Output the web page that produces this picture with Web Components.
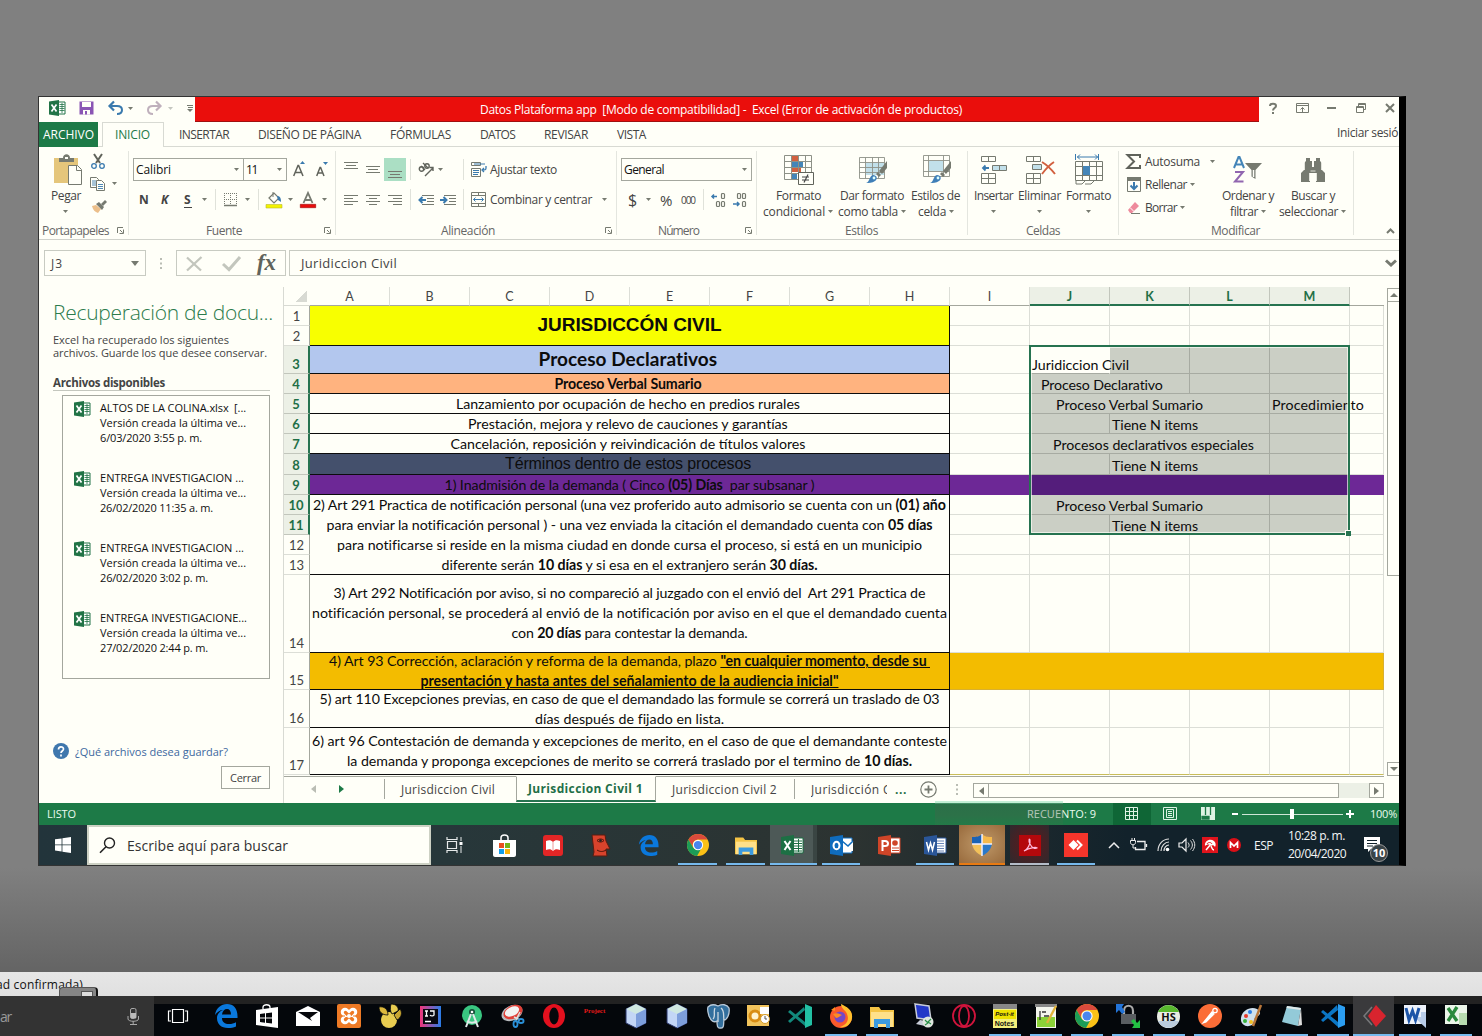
<!DOCTYPE html>
<html lang="es">
<head>
<meta charset="utf-8">
<title>Datos Plataforma app - Excel</title>
<style>
html,body{margin:0;height:1036px;width:1482px;overflow:hidden}
body{background:linear-gradient(#808080 0,#808080 868px,#646464 972px);font-family:"Open Sans","Noto Sans",sans-serif;font-size:12px;color:#444}
</style>
</head>
<body>
<remote-desktop></remote-desktop>
<script>
/* ---------- icons: name -> [width, height, svg content] ---------- */
const G='#767a70', B='#3a7aae';
const chrome='<circle cx="12" cy="12" r="12" fill="#fbc116"/><path d="M1.6 6A12 12 0 0 1 22.4 6H12a6 6 0 0 0-5.2 9z" fill="#d94a3c"/><path d="M1.6 6A12 12 0 0 0 11 24l5-9a6 6 0 0 1-9.2 0z" fill="#1c9c57"/><circle cx="12" cy="12" r="5.6" fill="#fff"/><circle cx="12" cy="12" r="4.5" fill="#4a86ee"/>';
const edge='<path d="M1 11C2 4 7 0 13 0c7 0 11 5 10.500 14H8c0 4 3 6 7 6 3 0 5-.7 7-1.800V22.500C19.500 23.700 17 24 14 24 7 24 3 20 3 14c0-4 3-7 6-8C6 6 3 8 1 11zM8 10.500h9C17 7 15.500 5 13 5s-4.600 2-5 5.500z" fill="#0a78dc"/>';
const folder='<path d="M0 3h9l2 3h13v17H0z" fill="#f5c445"/><path d="M1 8h22v15H1z" fill="#ffe08a"/><path d="M4 24v-9h16v9h-4v-4H8v4z" fill="#3c9be0"/>';
const cube='<path d="M12 0l10 5v14l-10 5-10-5V5z" fill="#c3d6f6" stroke="#28346a"/><path d="M12 0l10 5-10 5L2 5z" fill="#cfe8e0"/><path d="M12 10v14l10-5V5z" fill="#7d9edb"/>';
const grid5=(c)=>`<path d="M.5.5h28v24H.5zM.5 6.500h28M.5 12.500h28M.5 18.500h28M7.500.5v24M14.500.5v24M21.500.5v24" fill="none" stroke="${c}"/>`;
const brush='<path d="M28 6v7l-5 6-3-3z" fill="#767a70"/><path d="M19 17l3 3-2 2-3-3z" fill="#767a70"/><path d="M7 28c4-1 3-7 7-8 4 0 5 4 2 6-3 2-6 2-9 2z" fill="#3f7fb8"/><circle cx="15" cy="23" r="1.400" fill="#dff"/>';
const xl='<path d="M9 2h7v12H9z" fill="#fff" stroke="#217346"/><path d="M10.500 4.500h5M10.500 6.500h5M10.500 8.500h5M10.500 10.500h5M13 3v10" stroke="#217346" stroke-width=".8"/><path d="M0 1.600L10 0v16L0 14.400z" fill="#217346"/><path d="M2.500 4.500l5 7M7.500 4.500l-5 7" stroke="#fff" stroke-width="1.700"/>';
const office=(c,glyph,doc)=>`<path d="M11 3h11v15H11z" fill="#fff" stroke="${c}"/>${doc}<path d="M0 2L13 0v21L0 19z" fill="${c}"/>${glyph}`;
const docLines='<path d="M13 6h7M13 8.500h7M13 11h7M13 13.500h7M13 16h7" stroke="#6a86b8" stroke-width="1"/>';
const ICONS={
excel:[16,16,xl],
save:[15,14,'<path d="M.5.5h14v13H.5z" fill="#8a55b4"/><path d="M3 1h9v5H3z" fill="#fffff8"/><path d="M4 9h7v4.500H4z" fill="#fffff8"/><path d="M6 10h2v3.500H6z" fill="#8a55b4"/>'],
undo:[15,14,`<path d="M1 5h8c3 0 5 1.700 5 4s-2 4-5 4" fill="none" stroke="${B}" stroke-width="2"/><path d="M6 .5L1.500 5 6 9.500" fill="none" stroke="${B}" stroke-width="2.200"/>`],
redo:[15,14,'<path d="M14 5H6C3 5 1 6.700 1 9s2 4 5 4" fill="none" stroke="#bfb0bc" stroke-width="2"/><path d="M9 .5L13.500 5 9 9.500" fill="none" stroke="#bfb0bc" stroke-width="2.200"/>'],
caret:[5,3,`<path d="M0 0h5L2.500 3z" fill="${G}"/>`],
caretL:[5,3,`<path d="M0 0h5L2.500 3z" fill="#c4c6c0"/>`],
caretB:[8,5,`<path d="M0 0h8L4 5z" fill="${G}"/>`],
qat:[6,7,`<path d="M0 .5h6M1 2.500h5" stroke="${G}"/><path d="M0 4h6L3 7z" fill="${G}"/>`],
help:[8,11,`<path d="M1 3C1 0 7 0 7 3c0 2-3 2.200-3 4.500M4 9v2" fill="none" stroke="${G}" stroke-width="2"/>`],
ropt:[13,10,`<path d="M.5.5h12v9H.5zM.5 2.500h12" fill="none" stroke="${G}"/><path d="M6.500 9V4.500M4.500 6.500l2-2 2 2" fill="none" stroke="${G}"/>`],
min:[9,2,`<path d="M0 0h9v2H0z" fill="${G}"/>`],
restore:[10,10,`<path d="M.5 3.500h7v6h-7zM2.500 3V.5h7v6h-2" fill="none" stroke="${G}"/><path d="M1 4.500h6M3 1.500h6" stroke="${G}"/>`],
close:[10,10,`<path d="M1 1l8 8M9 1L1 9" stroke="${G}" stroke-width="2"/>`],
paste:[28,31,'<path d="M0 4h24v25H0z" fill="#e5c67b"/><path d="M5 4h4c0-5 7-5 7 0h4v4H5z" fill="#767a70"/><path d="M11 3h3v2h-3z" fill="#fffff8"/><path d="M14.500 11.500h9l4 4v15h-13z" fill="#fffff8" stroke="#767a70"/><path d="M22.500 12v4.500h5" fill="none" stroke="#767a70"/>'],
cut:[14,15,`<path d="M3 0l6 9M11 0L5 9" stroke="#60635b" stroke-width="2"/><circle cx="3" cy="12" r="2.300" fill="none" stroke="${B}" stroke-width="1.300"/><circle cx="11" cy="12" r="2.300" fill="none" stroke="${B}" stroke-width="1.300"/>`],
copy:[16,14,`<path d="M.5.5h6l2 2v8h-8z" fill="#fffff8" stroke="${G}"/><path d="M2 4h4M2 6h4M2 8h4" stroke="${B}" stroke-width=".9"/><path d="M6.500 3.500h5l3 3v7h-8z" fill="#fffff8" stroke="${G}"/><path d="M8 7.500h5M8 9.500h5M8 11.500h5" stroke="${B}" stroke-width=".9"/>`],
painter:[16,13,'<path d="M1 6l4-1 5 4-3 4c-3-1-5-3-6-7z" fill="#ecbf8b"/><path d="M5 4l3-2 5 5-2 3z" fill="#767a70"/><path d="M10 4l4-4 2 2-4 4z" fill="#767a70"/>'],
launch:[7,7,`<path d="M.5 6V.5H6" fill="none" stroke="${G}"/><path d="M3 3l2.500 2.500M6.500 2.500v4h-4" fill="none" stroke="${G}"/>`],
grow:[12,16,`<path d="M.7 15L5 4.500h.6L10 15M2.500 11.500h5.600" fill="none" stroke="#60635b" stroke-width="1.500"/><path d="M7 3h5L9.500 0z" fill="${B}"/>`],
shrink:[12,14,`<path d="M.7 14L4 5.500h.6L8 14M2 11h4.600" fill="none" stroke="#60635b" stroke-width="1.500"/><path d="M7 0h5L9.500 3z" fill="${B}"/>`],
borders:[14,14,`<path d="M.5 0v13M6.500 0v13M12.500 0v13M0 .5h13M0 6.500h13" stroke="${G}" stroke-dasharray="1 1"/><path d="M0 12.500h13" stroke="${G}" stroke-width="1.500"/>`],
fill:[16,16,`<path d="M3 6l5-5 5 5-5 5z" fill="none" stroke="${G}" stroke-width="1.200"/><path d="M7 0v5" stroke="${G}"/><path d="M11 4c3 0 4 2 4 6l-3-2z" fill="${B}"/><path d="M0 12.500h16v3.500H0z" fill="#f3f300" stroke="#b8bb30" stroke-width=".6"/>`],
fcolor:[16,16,`<path d="M3.500 11L8 1l4.500 10M5.500 8h5" fill="none" stroke="${G}" stroke-width="1.800"/><path d="M.3 12.300h15.400v3.400H.3z" fill="#e80c0c" stroke="#900" stroke-width=".6"/>`],
atop:[14,14,`<path d="M0 .5h14M2 3.500h10M0 6.500h14" stroke="${G}"/>`],
amid:[14,7,`<path d="M0 .5h14M2 3.500h10M0 6.500h14" stroke="${G}"/>`],
abot:[14,9,`<path d="M0 2.500h14M2 5.500h10M0 8.500h14" stroke="${G}"/>`],
left:[14,10,`<path d="M0 .5h14M0 3.500h9M0 6.500h14M0 9.500h9" stroke="${G}"/>`],
cent:[14,10,`<path d="M0 .5h14M3 3.500h8M0 6.500h14M3 9.500h8" stroke="${G}"/>`],
right:[14,10,`<path d="M0 .5h14M5 3.500h9M0 6.500h14M5 9.500h9" stroke="${G}"/>`],
orient:[16,15,`<g fill="none" stroke="#60635b" stroke-width="1.400"><circle cx="3.500" cy="7" r="2.200"/><path d="M3 4l4 4M5 1l5 5"/><circle cx="9" cy="4" r="2.200"/><path d="M7 14l8-8M11.500 5.500H15V9"/></g>`],
outd:[16,10,`<path d="M4 .5h12M9 3.500h7M9 6.500h7M4 9.500h12" stroke="${G}"/><path d="M8 5H2M4.500 2L1.500 5l3 3" fill="none" stroke="${B}" stroke-width="2"/>`],
ind:[16,10,`<path d="M4 .5h12M9 3.500h7M9 6.500h7M4 9.500h12" stroke="${G}"/><path d="M0 5h6M3.500 2l3 3-3 3" fill="none" stroke="${B}" stroke-width="2"/>`],
wrap:[16,15,`<path d="M.5.500h9v3h-9zM.5 6.500h9v8h-9z" fill="none" stroke="${G}"/><path d="M2 8.500h6M2 10.500h6M2 12.500h5M3 2h11" stroke="${B}"/><path d="M15 4v2c0 2-1 2-4 2M13 6l-2 2 2 2" fill="none" stroke="${B}" stroke-width="1.300"/>`],
merge:[15,15,`<path d="M.5.5h14v14H.5zM.5 3.500h14M.5 11.500h14M7.500.5v3M7.500 11.500v3" fill="none" stroke="${G}"/><path d="M2.500 7.500h10M4.500 5.500l-2 2 2 2M10.500 5.500l2 2-2 2" fill="none" stroke="${B}"/>`],
dec1:[15,14,`<path d="M6 3.500H1M3 1.500l-2 2 2 2" fill="none" stroke="${B}" stroke-width="1.500"/><g fill="none" stroke="${G}" stroke-width="1.200"><rect x="10.500" y=".5" width="3" height="5" rx="1"/><rect x="5.500" y="8.500" width="3" height="5" rx="1"/><rect x="10.500" y="8.500" width="3" height="5" rx="1"/></g>`],
dec2:[15,14,`<path d="M0 11h6M4 9l2 2-2 2" fill="none" stroke="${B}" stroke-width="1.500"/><g fill="none" stroke="${G}" stroke-width="1.200"><rect x="4.500" y=".5" width="3" height="5" rx="1"/><rect x="9.500" y=".5" width="3" height="5" rx="1"/><rect x="9.500" y="8.500" width="3" height="5" rx="1"/></g>`],
cond:[30,30,`<path d="M8 1h6v5H8zM8 13h9v4H8z" fill="#d2603f"/><path d="M8 7h11v5H8zM8 19h5v5H8z" fill="#4485b8"/>${grid5('#8d9187').replace(/28/g,'27')}<path d="M14.500 17.500h15v12h-15z" fill="#fffff8" stroke="#60635b"/><path d="M18 22h7M18 25h7M24 19.500l-4 8" stroke="#444" stroke-width="1.200"/>`],
ftab:[30,30,`<path d="M7 8h18v12H7z" fill="#c2e0ea"/><path d="M.5 2.500h25v21H.5zM.5 7.500h25M.5 12.500h25M.5 17.500h25M6.500 2.500v21M13.500 2.500v21M19.500 2.500v21" fill="none" stroke="#8d9187" stroke-width=".9"/>${brush}`],
cellst:[30,30,`<path d="M.5.500h26v21H.5zM.5 5.500h26M5.500.5v21M20.500.5v21M.5 16.500h26" fill="none" stroke="#8d9187" stroke-width=".9"/><path d="M6 6h14v10H6z" fill="#c2e0ea"/>${brush}`],
insc:[27,28,`<g fill="#fffff8" stroke="${G}"><path d="M.5.5h14v5H.5zM7.500.5v5M.5 17.500h14v10H.5zM7.500 17.500v10M.5 22.500h14"/><path d="M11.500 9.500h14v5h-14zM18.500 9.500v5" fill="#c2e0ea"/></g><path d="M8 12H2M4.500 9.500L2 12l2.500 2.500" fill="none" stroke="${B}" stroke-width="1.800"/>`],
delc:[30,28,`<g fill="#fffff8" stroke="${G}"><path d="M.5.5h14v5H.5zM7.500.5v5M.5 17.500h14v10H.5zM7.500 17.500v10M.5 22.500h14"/><path d="M6.500 8.500h9v5h-9z" fill="#c2e0ea"/></g><path d="M16 6c5 3 9 7 13 12M28 6c-5 3-9 8-12 12" fill="none" stroke="#d2603f" stroke-width="2"/>`],
fmtc:[29,31,`<path d="M2 3h21M5 .500L2.500 3 5 5.500M20 .500L22.500 3 20 5.500M.5 0v6M23.500 0v6" fill="none" stroke="${B}"/><path d="M.5 7.500h27v19H.5zM.5 12.500h27M.5 21.500h27M7.500 7.500v19M14.500 7.500v19M21.500 7.500v19" fill="none" stroke="${G}"/><path d="M8 12h7v9H8z" fill="#4485b8"/><path d="M1 27v3h6l3-3M10 30h6l3-3" fill="none" stroke="${G}"/>`],
sum:[15,15,'<path d="M14 4V1H1.500L8 7.500 1.500 14H14v-3" fill="none" stroke="#60635b" stroke-width="2"/>'],
fillD:[14,15,`<path d="M.5.5h13v14H.5z" fill="none" stroke="${G}"/><path d="M0 0h14v4H0z" fill="${G}"/><path d="M7 5v7M3.500 8.500L7 12l3.500-3.500" fill="none" stroke="${B}" stroke-width="2"/>`],
erase:[14,14,'<path d="M8 1l4 4-7 7H3L1 9z" fill="#ee8a9c"/><path d="M3 6.500l4 4" stroke="#fff"/><path d="M4 12.500h9" stroke="#767a70"/>'],
sort:[30,28,`<path d="M1 12L5.500 1h1L11 12M2.500 8.500h7" fill="none" stroke="#4485b8" stroke-width="2"/><path d="M2 16h8l-8 9.500h8.500" fill="none" stroke="#9166b0" stroke-width="2"/><path d="M12 7h17l-6.500 7v9l-4-2.500V14z" fill="${G}"/><path d="M20.500 14v7" stroke="#fffff8" stroke-width="1.500"/>`],
find:[26,24,`<path d="M6 0h4v3h2v6h2V3h2V0h4v3l2 2v7l3 3v9h-9v-9h-6v9H1v-9l3-3V5l2-2z" fill="${G}"/><path d="M4.500 4v8M21.500 4v8M10.500 13h5M9.500 15v8M16.500 15v8" stroke="#fffff8" stroke-width=".8"/>`],
up:[9,6,`<path d="M1 5l3.500-3.500L8 5" fill="none" stroke="${G}" stroke-width="2"/>`],
down:[12,8,`<path d="M1 1.500L6 6l5-4.500" fill="none" stroke="${G}" stroke-width="3"/>`],
fxx:[17,15,'<path d="M1 1.500l14 13M15.500 1L1 14.500" stroke="#c3c6bd" stroke-width="2.300"/>'],
fxv:[19,15,'<path d="M1 8l6 5.500L18 1" fill="none" stroke="#c3c6bd" stroke-width="3"/>'],
dots:[2,11,`<path d="M0 0h2v2H0zM0 4.500h2v2H0zM0 9h2v2H0z" fill="#babdb4"/>`],
qm:[16,16,'<circle cx="8" cy="8" r="8" fill="#3f77ad"/><path d="M5.500 6.500c0-3.500 5-3.300 5-.5 0 2-2.500 2-2.500 4M8 11.500v2" fill="none" stroke="#fff" stroke-width="1.700"/>'],
triL:[5,8,'<path d="M5 0v8L0 4z" fill="#babdb4"/>'],triR:[5,8,'<path d="M0 0v8l5-4z" fill="#1d7a47"/>'],
sL:[5,8,`<path d="M5 0v8L0 4z" fill="${G}"/>`],sR:[5,8,`<path d="M0 0v8l5-4z" fill="${G}"/>`],
sU:[8,4,`<path d="M0 4h8L4 0z" fill="${G}"/>`],sD:[8,4,`<path d="M0 0h8L4 4z" fill="${G}"/>`],
plus:[17,17,`<circle cx="8.500" cy="8.500" r="7.700" fill="none" stroke="${G}" stroke-width="1.200"/><path d="M8.500 4.500v8M4.500 8.500h8" stroke="${G}" stroke-width="1.800"/>`],
vgrid:[13,13,'<path d="M.5.5h12v12H.5zM.5 4.500h12M.5 8.500h12M4.500.5v12M8.500.5v12" fill="none" stroke="#dff3e4"/>'],
vpage:[14,13,'<path d="M.5.5h13v12H.5zM3.500 2.500h7v8h-7zM5 4.500h4M5 6.500h4M5 8.500h4" fill="none" stroke="#dff3e4"/>'],
vbrk:[14,13,'<path d="M0 0h14v13H0z" fill="#dff3e4"/><path d="M4.500 0v8M9.500 0v8M1 9.500h7v2.500H1z" stroke="#1d7a47" stroke-width="1.300" fill="#1d7a47"/>'],
zm:[6,2,'<path d="M0 0h6v2H0z" fill="#fff"/>'],zp:[8,8,'<path d="M4 0v8M0 4h8" stroke="#fff" stroke-width="2"/>'],
zoom:[101,10,'<path d="M0 5.500h101" stroke="#cfe6d6"/><path d="M48 0h4v10h-4z" fill="#fff"/>'],
win:[16,16,'<path d="M0 2.300L6.600 1.400v6.100H0zM7.400 1.300L16 0v7.500H7.400zM0 8.300h6.600v6.100L0 13.600zM7.400 8.300H16V16l-8.600-1.200z" fill="#fff"/>'],
lens:[17,17,'<circle cx="10.500" cy="6" r="5" fill="none" stroke="#222" stroke-width="1.400"/><path d="M7 9.800L1 15.800" stroke="#222" stroke-width="1.600"/>'],
tview:[17,16,'<path d="M1 0v2.500h10V0M1 16v-2.500h10V16M1.500 4.500h9v7h-9z" fill="none" stroke="#e6eaea" stroke-width="1.200"/><path d="M15 0v4M15 9v7" stroke="#e6eaea"/><path d="M13.500 5h3v3h-3z" fill="#fff"/>'],
store:[23,23,'<path d="M8 7V4c0-4 7-4 7 0v3" fill="none" stroke="#fff" stroke-width="1.500"/><path d="M0 6h23v15c0 1-1 2-2 2H2c-1 0-2-1-2-2z" fill="#fff"/><path d="M6 9h5v5H6z" fill="#e8501f"/><path d="M12 9h5v5h-5z" fill="#74b51b"/><path d="M6 15h5v5H6z" fill="#119dea"/><path d="M12 15h5v5h-5z" fill="#fbb40c"/>'],
book:[20,21,'<rect width="20" height="21" rx="3" fill="#e32626"/><path d="M3 6c3-1 5-1 7 1 2-2 4-2 7-1v9c-3-1-5-1-7 1-2-2-4-2-7-1z" fill="#fff"/><path d="M10 7v9" stroke="#e99"/>'],
face:[20,23,'<path d="M1 1h13l1 6 4 8h-4l1 7H2l1-4z" fill="#d8432c" stroke="#5a1c10"/><path d="M6 6.500c2-2 5-2 7 0-2 2-5 2-7 0zM6 16c3 2 6 2 9 0" fill="none" stroke="#4a1209"/><circle cx="9.500" cy="6.500" r="1.300" fill="#222"/>'],
edge:[24,24,edge],chrome:[24,24,chrome],folder:[24,24,folder],cube:[24,24,cube],
excelT:[22,21,office('#1c7044','<path d="M3.500 6l6 9M9.500 6l-6 9" stroke="#fff" stroke-width="2"/>','<path d="M13 6h8M13 8.500h8M13 11h8M13 13.500h8M13 16h8M17.500 4v13" stroke="#1c7044"/>')],
outl:[23,21,office('#0f6cbd','<ellipse cx="6.500" cy="10.500" rx="3" ry="3.700" fill="none" stroke="#fff" stroke-width="2"/>','<path d="M11 6h12v10H11z" fill="#fff"/><path d="M12 6l6 5 5-5" fill="none" stroke="#0f6cbd" stroke-width="1.500"/>')],
ppt:[22,21,office('#cf4528','<path d="M4.500 16V6h2.500c4 0 4 5 0 5H5" fill="none" stroke="#fff" stroke-width="2"/>','<circle cx="17" cy="8" r="2.800" fill="#cf4528"/><path d="M14 13h7M14 15.500h7" stroke="#cf4528"/>')],
wordT:[22,21,office('#2a5699','<path d="M2.500 7l2 8 2-7 2 7 2-8" fill="none" stroke="#fff" stroke-width="1.500"/>',docLines)],
shield:[22,22,'<path d="M11 0C8 3 5 3 1 3v7h10z" fill="#1a62b5"/><path d="M11 0c3 3 6 3 10 3v7H11z" fill="#f5b94c"/><path d="M1 10h10v12C5 19 2 15 1 10z" fill="#f3c15a"/><path d="M11 10h10c-1 5-4 9-10 12z" fill="#2a78c8"/><path d="M11 0v22M1 10h20" stroke="#eef" stroke-width="1.500"/>'],
acro:[22,21,'<path d="M0 0h22v21H0z" fill="#b4080c"/><path d="M5 16c3-1 7-7 6-11-.5-2-2 0 0 4 2 4 5 5 7 4 1-1-7-1-13 3z" fill="none" stroke="#fbd" stroke-width="1.200"/>'],
anyd:[24,24,'<path d="M0 0h24v24H0z" fill="#f5352b"/><path d="M9.500 7l5 5-5 5-5-5z" fill="#fff"/><path d="M13 7.500l4.500 4.500-4.500 4.500" fill="none" stroke="#fff" stroke-width="2"/>'],
tchev:[12,7,'<path d="M1 6l5-5 5 5" fill="none" stroke="#eee" stroke-width="1.500"/>'],
batt:[17,14,'<path d="M7 3.500h8v8H5.500V9M16.500 6v3" fill="none" stroke="#eee" stroke-width="1.300"/><path d="M.5 2.500h5v2c0 3-5 3-5 0zM2 0v2M4.500 0v2M3 7v3h3" fill="none" stroke="#eee"/>'],
wifi:[13,14,'<g fill="none" stroke="#ddd" stroke-width="1.200"><path d="M1 13C1 6 6 1 12 1M4 13c0-5 4-9 8-9M7 13c0-3 2-6 5-6"/></g><circle cx="10.500" cy="11.500" r="1.800" fill="#fff"/>'],
vol:[17,14,'<path d="M1 5h3l4-4v12L4 9H1z" fill="none" stroke="#eee" stroke-width="1.200"/><path d="M10 4.500c1.500 2 1.500 3.500 0 5M12.500 2.500c2.500 3 2.500 6 0 9M14.500 1c3 4 3 8 0 12" fill="none" stroke="#ddd"/>'],
avira:[16,16,'<path d="M0 0h16v16H0z" fill="#e0141c"/><path d="M3 9C2 4 8 1 12 4c2 2 2 4 1 6-1-2-3-2-4-1-1-2-4-2-6 0z" fill="#fff"/><path d="M5 7c1-2 4-2 5 0" stroke="#e0141c" fill="none"/><path d="M9 7l-5 6M9 9c1 2 1 4 3 4" fill="none" stroke="#fff" stroke-width="1.500"/>'],
mega:[14,14,'<circle cx="7" cy="7" r="7" fill="#d90f17"/><path d="M3.500 10V4.500L7 8l3.500-3.500V10" fill="none" stroke="#fff" stroke-width="1.700"/>'],
note:[16,16,'<path d="M0 0h16v12H7l-3 3v-3H0z" fill="#fff"/><path d="M3 3.500h10M3 6.500h10M3 9h6" stroke="#12222b"/>'],
mic:[13,17,'<rect x="3.500" y=".5" width="5.500" height="10" rx="1.500" fill="none" stroke="#aaa"/><path d="M4 5h5v5H4z" fill="#bbb"/><path d="M1 8v3c0 3 10.500 3 10.500 0V8M6.200 13v3M3 16.500h7" fill="none" stroke="#aaa"/>'],
tv2:[20,16,'<path d="M4.500 1.500h11v13h-11zM3 3H.5v10H3M17 3h2.500v10H17" fill="none" stroke="#fff" stroke-width="1.200"/>'],
store2:[22,24,'<path d="M7 5V3c0-3 7-3 7 0v2" fill="none" stroke="#fff" stroke-width="1.300"/><path d="M0 6l22-3v21L0 21z" fill="#fff"/><path d="M4 10l5-.7v4.200H4zM10 9.200l6-.8v5.100h-6zM4 14.500h5v4.200L4 18zM10 14.500h6v5.100l-6-.8z" fill="#05070b"/>'],
mail:[24,20,'<path d="M0 6l12-6 12 6v14H0z" fill="#fff"/><path d="M2 6h20L14 12l2 3z" fill="#05070b"/>'],
xampp:[24,24,'<rect width="24" height="24" rx="2" fill="#ee7a25"/><path d="M8 8l8 8M16 8l-8 8" stroke="#fff" stroke-width="8.500" stroke-linecap="round"/><path d="M8 12H4M20 12h-4" stroke="#ee7a25" stroke-width="1"/><path d="M8.500 8.500l7 7M15.500 8.500l-7 7" stroke="#ee7a25" stroke-width="3.200" stroke-linecap="round"/><circle cx="12" cy="12" r="2" fill="#fff"/>'],
dish:[24,24,'<circle cx="11" cy="16" r="8" fill="#e8cc50"/><path d="M1 3c5-1 9 2 9 8-6 0-9-3-9-8z" fill="#dcb83c" stroke="#05070b" stroke-width=".8"/><path d="M13 0c5 0 8 3 7 7l-6 3c-2-3-2-6-1-10z" fill="#e8cc50" stroke="#05070b" stroke-width=".8"/><path d="M22 5c3 4 1 9-3 11l-3-5z" fill="#c9a632" stroke="#05070b" stroke-width=".8"/>'],
ij:[21,21,'<defs><linearGradient id="a"><stop stop-color="#f0357a"/><stop offset="1" stop-color="#2a7de8"/></linearGradient></defs><path d="M0 0h21v21H0z" fill="url(#a)"/><path d="M3 3h15v15H3z" fill="#080810"/><path d="M5 5h3M6.500 5v5M5 10h3M10 5h4v4c0 1-3 1.500-4 0M5 15.500h6" fill="none" stroke="#fff" stroke-width="1.300"/>'],
astu:[22,24,'<circle cx="11" cy="11" r="10" fill="#39c680"/><circle cx="11" cy="8" r="3" fill="#164c38"/><circle cx="11" cy="8" r="1.300" fill="#fff"/><path d="M10 10L5 23M12 10l5 13M6 17c3 2 7 2 10 0" fill="none" stroke="#dfe8e8" stroke-width="2"/>'],
snip:[24,24,'<ellipse cx="11" cy="9" rx="11" ry="7.500" fill="#b9bcc0" transform="rotate(-25 11 9)"/><ellipse cx="12" cy="8" rx="10" ry="6.500" fill="#e04038" transform="rotate(-25 12 8)"/><ellipse cx="11" cy="7.500" rx="7.500" ry="4.500" fill="#f3f3f3" transform="rotate(-25 11 7.500)"/><path d="M19 8l-5 10M13 13l6 3" stroke="#ddd" stroke-width="1.500"/><ellipse cx="14.500" cy="20" rx="2" ry="3" fill="none" stroke="#2a90d8" stroke-width="1.800"/><ellipse cx="20" cy="17" rx="2.600" ry="2" fill="none" stroke="#2a90d8" stroke-width="1.800"/>'],
opera:[22,24,'<ellipse cx="11" cy="12" rx="11" ry="12" fill="#e3101e"/><ellipse cx="11" cy="12" rx="4.700" ry="8.500" fill="#05070b"/>'],
pg:[24,24,'<path d="M2 3c4-4 8-2 10-1 4-2 9-2 11 2 1 6-2 12-5 12-1 3 1 8-3 8-4 1-4-3-4-7-3 2-6 0-8-5C2 9 1 6 2 3z" fill="#336f9d" stroke="#b9c9d8" stroke-width="1.300"/><path d="M9 4c-2 4 1 8-2 11M15 4c4 3 2 8 3 12M12 8v10" fill="none" stroke="#cbd8e2" stroke-width="1.300"/>'],
out10:[23,22,'<path d="M0 0h22v21H0z" fill="#f1c35c"/><circle cx="8" cy="11" r="5" fill="#fff3d0" stroke="#d98d14" stroke-width="3"/><path d="M13 2h9v7h-9z" fill="#fff"/><circle cx="18" cy="14" r="4.500" fill="#fff" stroke="#d0992e"/><path d="M18 11v3h2" stroke="#555" fill="none"/>'],
vsg:[24,24,'<path d="M17 0l7 3v18l-7 3z" fill="#22c0a4"/><path d="M17 6L2 19l-2-2 16-14zM0 8l2-2 15 12v4z" fill="#12897c"/>'],
vsb:[24,24,'<path d="M17 6L2 18l-2-2 16-15zM0 8l2-2 15 12v5z" fill="#0b76c4"/><path d="M17 0l7 3v18l-7 3z" fill="#2b9df0"/>'],
ffox:[24,24,'<circle cx="12" cy="13" r="11" fill="#fb5a2c"/><path d="M12 0c6 3 12 6 11 14-1 7-7 10-12 9 8-3 9-8 7-13-1-4-6-5-6-10z" fill="#ffc02d"/><path d="M2 6l4-3v4z" fill="#ff8a1e"/><circle cx="11" cy="13" r="5.500" fill="#7448c8"/><path d="M4 10c4-2 7 0 9 1-3 1-3 3-6 3z" fill="#ff8b20"/>'],
pcnet:[24,24,'<path d="M4 0l14 2 2 14-14-2z" fill="#2338c8" stroke="#c8ccd8" stroke-width="1.500"/><path d="M9 16l6 1-1 5-9-2z" fill="#c8ccd8"/><circle cx="17" cy="18" r="5.500" fill="#dfe6df"/><path d="M14 16l3 3-3 2M20 15l-3 3 3 2" fill="none" stroke="#2a9048" stroke-width="1.200"/>'],
operg:[24,24,'<ellipse cx="12" cy="12" rx="11" ry="11" fill="none" stroke="#d0143c" stroke-width="1.800"/><ellipse cx="12" cy="12" rx="5" ry="10" fill="none" stroke="#d0143c" stroke-width="1.800"/>'],
npp:[22,24,'<path d="M1 1h20v23H1z" fill="#f4f6ee"/><path d="M2 13h18v10H2z" fill="#8bd238"/><path d="M0 0h22v3H0z" fill="#888"/><path d="M5 7v9M7 8h4M9 12h5" stroke="#333" stroke-width="1.300"/><path d="M21 2l-9 17" stroke="#e2b43a" stroke-width="2.300"/>'],
lock:[24,24,'<path d="M8 10V7c0-7 9-7 9 0v3" fill="none" stroke="#aaa" stroke-width="2.200"/><path d="M5 10h15v10H5z" fill="#5a5e62"/><path d="M0 0h8L6 3l3 5-3 2-3-4-3 3z" fill="#2374d8"/><path d="M24 24h-8l2-3-3-4 3-2 3 4 3-3z" fill="#23c043"/>'],
hsb:[23,23,'<circle cx="11.500" cy="11.500" r="11.500" fill="#e8ece4"/><path d="M1 7C5-2 18-2 22 7z" fill="#58b82e"/><path d="M1 16C5 25 18 25 22 16z" fill="#bcd"/>'],
post:[24,24,'<circle cx="12" cy="12" r="12" fill="#fb6d37"/><path d="M6 18L15 8M5 19l3-1 8-8-2-2z" fill="#fff" stroke="#fff" stroke-width="1.200"/><circle cx="17" cy="6.500" r="2.200" fill="none" stroke="#fff" stroke-width="1.300"/>'],
paint:[24,24,'<path d="M2 14C3 6 12 2 18 5c6 4 2 7-1 8s1 5-4 8-12 0-11-7z" fill="#cfe0ee"/><circle cx="7" cy="12" r="2" fill="#e83a2c"/><circle cx="11" cy="8" r="2" fill="#2a7de8"/><circle cx="6" cy="17" r="2" fill="#36b03a"/><circle cx="12" cy="18" r="2" fill="#f3c020"/><path d="M22 1L14 22" stroke="#b8763a" stroke-width="2.500"/>'],
notep:[24,24,'<path d="M7 2l14 2-3 18L2 18z" fill="#93cad8"/><path d="M7 2l14 2-.5 2-14-2z" fill="#dfe8e8"/><path d="M21 4l1 17-4 1z" fill="#ddd"/>'],
anyg:[24,24,'<path d="M10 3L2 12l8 9" fill="none" stroke="#77787a" stroke-width="1.500"/><path d="M14 1l10 11-10 11L6 12z" fill="#d8242e"/>'],
word10:[22,24,'<path d="M0 1h22v19H0z" fill="#eef3fb"/><path d="M17 8h5v12h-5zM10 13h12v11z" fill="#b9cdea"/><path d="M2 4l3 12 3.500-9 3 9L15 4" fill="none" stroke="#1d55a8" stroke-width="3"/>'],
xl10:[22,24,'<path d="M0 1h22v19H0z" fill="#ecf5ea"/><path d="M14 9h8v12h-8z" fill="#b8dcb0"/><path d="M3 4l9 13M12 3L3 17" stroke="#2a8a3c" stroke-width="3.300"/>']
};
/* ---------- helpers ---------- */
class Base extends HTMLElement{
  connectedCallback(){ if(this.shadowRoot) return;
    this.attachShadow({mode:'open'}).innerHTML=`<style>:host{display:block;box-sizing:border-box}*{box-sizing:border-box}
.lane{display:flex;align-items:center}.lane>span{flex:none;display:flex;align-items:center;align-self:stretch}
.col{display:flex;flex-direction:column}${this.css()}</style>${this.html()}`; }
  css(){return ''} html(){return '<slot></slot>'}
}
/* Row of items: each is [x, width, html]; gaps become left margins. */
const lane=(x0,h,items)=>{let c=x0;return `<div class="lane" style="height:${h}px">`+items.map(([x,w,t])=>{const m=x-c;c=x+w;return `<span style="margin-left:${m}px;width:${w}px">${t}</span>`}).join('')+'</div>'};
const I=(n,w,h)=>`<x-icon name="${n}"${w?` w="${w}" h="${h||w}"`:''}></x-icon>`;
const ic=(x,n,w,h)=>[x,w||ICONS[n][0],I(n,w,h)];
const F=(w,t,s)=>`<x-fit w="${w}"${s?` style="${s}"`:''}>${t}</x-fit>`;
const tx=(x,w,t,s)=>[x,w,F(w,t,s)];
const def=(n,css,html)=>customElements.define(n,class extends Base{css(){return css} html(){return html}});

customElements.define('x-icon',class extends HTMLElement{connectedCallback(){if(this.shadowRoot)return;
  const [w,h,s]=ICONS[this.getAttribute('name')];const W=this.getAttribute('w')||w,H=this.getAttribute('h')||h;
  this.attachShadow({mode:'open'}).innerHTML=`<style>:host{display:block;flex:none;width:${W}px;height:${H}px}svg{display:block;overflow:visible}</style><svg width="${W}" height="${H}" viewBox="0 0 ${w} ${h}" preserveAspectRatio="none">${s}</svg>`}});

/* ---------- title bar and ribbon tabs ---------- */
def('xl-title','x-icon{margin-bottom:3px}',lane(39,25,[ic(49,'excel',16),ic(79,'save'),ic(108,'undo'),ic(128,'caret'),ic(147,'redo'),ic(168,'caretL'),ic(187,'qat'),
 [195,1064,`<div style="width:1064px;height:25px;background:#ea0e0c;border-bottom:1px solid #a01010;display:flex;align-items:center;padding:1px 0 0 285px;color:#fff">${F(482,'Datos Plataforma app  [Modo de compatibilidad] -  Excel (Error de activación de productos)')}</div>`],
 ic(1269,'help'),ic(1296,'ropt'),ic(1327,'min'),ic(1356,'restore'),ic(1385,'close')]));
def('xl-tabs',':host{border-bottom:1px solid #d8dad3;height:25px}.a{background:#1d7a47;color:#fff;width:59px;height:25px;padding-left:4px;display:flex;align-items:center}.i{width:62px;height:25px;border:1px solid #d8dad3;border-bottom:0;background:#fffff8;color:#1d7a47;padding:0 0 1px 12px;display:flex;align-items:center}',
 lane(39,25,[[39,59,`<div class="a">${F(51,'ARCHIVO')}</div>`],[102,62,`<div class="i">${F(35,'INICIO')}</div>`],tx(179,50,'INSERTAR'),tx(258,103,'DISEÑO DE PÁGINA'),tx(390,61,'FÓRMULAS'),tx(480,35,'DATOS'),tx(544,44,'REVISAR'),tx(617,29,'VISTA'),tx(1337,61,'Iniciar sesió','margin-bottom:5px')]));

/* ---------- ribbon ---------- */
const lab=(x0,items)=>`<div style="color:#666;margin-top:auto;margin-bottom:1px">${lane(x0,16,items)}</div>`;
const grp=(w,body)=>`<section style="width:${w}px">${body}</section>`;
const two=(x0,a,b,l)=>`<div style="height:8px"></div>${lane(x0,28,a)}<div style="height:1px"></div>${lane(x0,31,b)}${lab(x0,l)}`;
const big=(x0,a,b,c)=>`<div style="height:7px"></div>${lane(x0,31,a)}<div style="height:2px"></div>${lane(x0,16,b)}${lane(x0,16,c)}`;
const box=(w,t,tw)=>`<div class="box" style="width:${w}px">${F(tw,t)}${I('caret')}</div>`;
const sep='<i></i>';
const ribbon=
grp(90,`<div style="display:flex"><div class="col" style="width:50px">${big(39,[ic(54,'paste')],[tx(51,30,'Pegar')],[ic(63,'caret')])}</div>
<div class="col" style="padding-top:3px">${lane(89,22,[ic(91,'cut')])}${lane(89,23,[ic(90,'copy'),ic(112,'caret')])}${lane(89,22,[ic(91,'painter')])}</div></div>${lab(39,[tx(42,67,'Portapapeles'),ic(117,'launch')])}`)+
grp(207,two(129,[[133,111,box(111,'Calibri',35)],[243,44,box(44,'11',11)],ic(293,'grow'),ic(316,'shrink')],
[tx(139,10,'N','font-weight:700'),tx(161,9,'K','font-weight:700;font-style:italic'),[184,8,`<u style="font-weight:700">${F(8,'S','border-bottom:1px solid #444;line-height:14px')}</u>`],ic(202,'caret'),[215,1,sep],ic(224,'borders'),ic(245,'caret'),[258,1,sep],ic(266,'fill'),ic(288,'caret'),ic(300,'fcolor'),ic(322,'caret')],[tx(206,36,'Fuente'),ic(324,'launch')]))+
grp(281,two(336,[ic(344,'atop'),ic(366,'amid'),[384,22,`<div style="width:22px;height:23px;background:#abdfc4;display:flex;align-items:flex-end;padding:0 0 3px 4px">${I('abot')}</div>`],[410,1,sep],ic(418,'orient'),ic(438,'caret'),[463,1,sep],ic(471,'wrap'),tx(490,67,'Ajustar texto')],
[ic(344,'left'),ic(366,'cent'),ic(388,'right'),[410,1,sep],ic(418,'outd'),ic(440,'ind'),[463,1,sep],ic(471,'merge'),tx(490,102,'Combinar y centrar'),ic(602,'caret')],[tx(441,54,'Alineación'),ic(605,'launch')]))+
grp(140,two(617,[[621,131,box(131,'General',40)]],[tx(628,8,'$','font-size:16px'),ic(646,'caret'),tx(660,13,'%','font-size:15px'),tx(681,14,'000','font-size:10px'),[703,1,sep],ic(711,'dec1'),ic(733,'dec2')],[tx(658,41,'Número'),ic(745,'launch')]))+
grp(211,big(757,[ic(784,'cond'),ic(859,'ftab'),ic(923,'cellst')],[tx(776,45,'Formato'),tx(840,64,'Dar formato'),tx(911,49,'Estilos de')],[tx(763,62,'condicional'),ic(828,'caret'),tx(838,60,'como tabla'),ic(901,'caret'),tx(918,28,'celda'),ic(949,'caret')])+lab(757,[tx(845,33,'Estilos')]))+
grp(151,big(968,[ic(981,'insc'),ic(1026,'delc'),ic(1075,'fmtc')],[tx(974,39,'Insertar'),tx(1018,43,'Eliminar'),tx(1066,45,'Formato')],[ic(991,'caret'),ic(1037,'caret'),ic(1086,'caret')])+lab(968,[tx(1026,34,'Celdas')]))+
grp(235,`<div style="display:flex"><div class="col" style="padding-top:3px;width:99px">${lane(1119,23,[ic(1126,'sum'),tx(1145,55,'Autosuma'),ic(1210,'caret')])}${lane(1119,23,[ic(1127,'fillD'),tx(1145,42,'Rellenar'),ic(1190,'caret')])}${lane(1119,23,[ic(1127,'erase'),tx(1145,32,'Borrar'),ic(1180,'caret')])}</div>
<div class="col">${big(1218,[ic(1233,'sort'),ic(1300,'find')],[tx(1222,52,'Ordenar y'),tx(1291,44,'Buscar y')],[tx(1230,28,'filtrar'),ic(1261,'caret'),tx(1279,59,'seleccionar'),ic(1341,'caret')])}</div></div>${lab(1119,[tx(1211,49,'Modificar')])}`)+
`<div style="margin:81px 0 0 32px">${I('up')}</div>`;
def('xl-ribbon',`:host{height:93px;border-bottom:1px solid #d0d2cb}.r{display:flex;height:92px}section{flex:none;height:92px;display:flex;flex-direction:column;background:linear-gradient(#e4e6df,#e4e6df) right 4px/1px 84px no-repeat;background-position:right 4px}
.box{height:23px;border:1px solid #a4a79e;display:flex;align-items:center;justify-content:space-between;padding:0 4px 0 2px;color:#111;background:#fffff8}i{display:block;width:1px;height:21px;background:#e0e2da}u{text-decoration:none}`,`<div class="r">${ribbon}</div>`);

/* ---------- formula bar ---------- */
def('xl-formula',':host{height:47px}.b{height:26px;border:1px solid #c8cbc2;display:flex;align-items:center}.fx{font:italic 700 23px/22px "Liberation Serif",serif;color:#60635b}',
lane(39,46,[[44,102,`<div class="b" style="width:102px;padding:0 6px;justify-content:space-between">${F(12,'J3')}${I('caretB')}</div>`],ic(160,'dots'),
[176,110,`<div class="b" style="width:110px;padding-left:9px">${I('fxx')}<span style="width:19px"></span>${I('fxv')}<span style="width:16px"></span><span class="fx">${F(19,'fx')}</span></div>`],
[289,1110,`<div class="b" style="width:1110px;border-right:0;padding:0 2px 0 11px;justify-content:space-between">${F(96,'Juridiccion Civil','font-size:13px')}${I('down')}</div>`]]));

/* ---------- document recovery pane ---------- */
const docs=[['ALTOS DE LA COLINA.xlsx  [...',146,'6/03/2020 3:55 p. m.',102],['ENTREGA INVESTIGACION ...',144,'26/02/2020 11:35 a. m.',113],['ENTREGA INVESTIGACION ...',144,'26/02/2020 3:02 p. m.',108],['ENTREGA INVESTIGACIONE...',147,'27/02/2020 2:44 p. m.',108]];
customElements.define('recovery-item',class extends Base{css(){return ':host{height:70px;display:flex;padding:5px 0 0 11px;gap:10px;color:#111;font-size:11px}.c{line-height:15px;margin-top:-1px}'}
 html(){const d=docs[this.getAttribute('n')];return `${I('excel')}<div class="c"><div>${F(d[1],d[0])}</div><div>${F(146,'Versión creada la última ve...')}</div><div>${F(d[3],d[2])}</div></div>`}});
def('xl-recovery',`:host{width:245px;height:516px;padding:13px 0 0 14px;border-right:1px solid #d8dad3;font-size:11px}
h2{margin:0;font-weight:300;font-size:21px;line-height:24px;color:#2b7b4c}.p{line-height:13px;margin-top:9px}h3{margin:16px 0 0;font-size:11.500px;line-height:15px;width:217px;border-bottom:1px solid #c4c7be}
.l{margin:4px 0 0 9px;width:208px;height:284px;border:1px solid #a4a79e}.q{display:flex;gap:6px;align-items:center;margin-top:64px;height:16px;color:#3d68a0}.btn{margin:7px 0 0 168px;width:49px;height:23px;border:1px solid #a4a79e;display:flex;align-items:center;justify-content:center}`,
`<h2>${F(220,'Recuperación de docu...')}</h2><div class="p">${F(176,'Excel ha recuperado los siguientes')}<br>${F(214,'archivos. Guarde los que desee conservar.')}</div><h3>${F(112,'Archivos disponibles')}</h3>
<div class="l">${docs.map((d,i)=>`<recovery-item n="${i}"></recovery-item>`).join('')}</div><div class="q">${I('qm')}${F(153,'¿Qué archivos desea guardar?')}</div><div class="btn">${F(31,'Cerrar')}</div>`);

/* ---------- worksheet ---------- */
const L='ABCDEFGHIJKLM'.split('');
let cells='<div class="corner"></div>'+L.map((c,i)=>`<div class="ch${i>8?' s':''}">${c}</div>`).join('')+'<div class="ch last"></div>';
for(let r=1;r<=17;r++)cells+=`<div class="rh${r>2&&r<12?' s':''}" style="grid-area:${r+1}/1">${r}</div>`;
const M=(r,n,bg,lines,st='')=>{cells+=`<div class="m" style="grid-area:${r+1}/2/span ${n}/span 8;background:${bg};${r>2&&r<9?'padding-right:3px;':''}${st}">${lines.map(([w,t])=>`<div>${F(w,t)}</div>`).join('')}</div>`};
M(1,2,'#f8ff00',[[184,'JURISDICCÓN CIVIL']],'font:700 19px/20px Liberation Sans,sans-serif;padding-bottom:1px');
M(3,1,'#b3c7ee',[[179,'Proceso Declarativos']],'font-size:19px;font-weight:700;padding-bottom:1px');
M(4,1,'#ffb37f',[[147,'Proceso Verbal Sumario']],'font-weight:700');
M(5,1,'none',[[344,'Lanzamiento por ocupación de hecho en predios rurales']]);
M(6,1,'none',[[320,'Prestación, mejora y relevo de cauciones y garantías']]);
M(7,1,'none',[[355,'Cancelación, reposición y reivindicación de títulos valores']]);
M(8,1,'#44506c',[[246,'Términos dentro de estos procesos']],'font:16px/20px Liberation Sans,sans-serif');
M(9,1,'#6d2896',[[370,'1) Inadmisión de la demanda ( Cinco <b>(05) Días</b>  par subsanar )']]);
M(10,4,'none',[[633,'2) Art 291 Practica de notificación personal (una vez proferido auto admisorio se cuenta con un <b>(01) año</b>'],[606,'para enviar la notificación personal ) - una vez enviada la citación el demandado cuenta con <b>05 días</b>'],[585,'para notificarse si reside en la misma ciudad en donde cursa el proceso, si está en un municipio'],[376,'diferente serán <b>10 días</b> y si esa en el extranjero serán <b>30 días.</b>']]);
M(14,1,'none',[[592,'3) Art 292 Notificación por aviso, si no compareció al juzgado con el envió del  Art 291 Practica de'],[635,'notificación personal, se procederá al envió de la notificación por aviso en el que el demandado cuenta'],[236,'con <b>20 días</b> para contestar la demanda.']],'padding-bottom:1px');
M(15,1,'#f3bc00',[[601,'4) Art 93 Corrección, aclaración y reforma de la demanda, plazo <b><u>"en cualquier momento, desde su </u></b>'],[418,'<b><u>presentación y hasta antes del señalamiento de la audiencia inicial"</u></b>']]);
M(16,1,'none',[[620,'5) art 110 Excepciones previas, en caso de que el demandado las formule se correrá un traslado de 03'],[189,'días después de fijado en lista.']]);
M(17,1,'none',[[635,'6) art 96 Contestación de demanda y excepciones de merito, en el caso de que el demandante conteste'],[565,'la demanda y proponga excepciones de merito se correrá traslado por el termino de <b>10 días.</b>']]);
/* [column span, text width, text, left padding] */
const T={'3-10':[1,97,'Juridiccion Civil',2],'4-10':[2,122,'Proceso Declarativo',11],'5-10':[3,147,'Proceso Verbal Sumario',26],'5-13':[1,92,'Procedimiento',2],'6-11':[2,86,'Tiene N items',2],'7-10':[3,201,'Procesos declarativos especiales',23],'8-11':[2,86,'Tiene N items',2],'10-10':[3,147,'Proceso Verbal Sumario',26],'11-11':[2,86,'Tiene N items',2]};
for(let r=1;r<=17;r++){
  if(r==9||r==15){cells+=`<div class="c" style="grid-area:${r+1}/10/auto/span 6;background:${r==9?'#6d2896':'#f3bc00'};border-color:${r==9?'#6d2896':'#d8b030'}"></div>`;
    if(r==9)cells+='<div class="c" style="grid-area:10/11/auto/span 4;background:#541d7b;border-color:#541d7b"></div>';continue}
  for(let c=9;c<=14;){const t=T[r+'-'+c],n=t?t[0]:1,s=r>2&&r<12&&c>9&&c<14;
    cells+=`<div class="c${s?' f':''}" style="grid-area:${r+1}/${c+1}/auto/span ${n};${t?`padding-left:${t[3]}px;`:''}${r==3&&c==10?'background:#fffff8;border-right-color:transparent;background-clip:padding-box;z-index:1;':''}${r==17?'border-bottom-color:#c9bd5a;':''}">${t?F(t[1],t[2]):''}</div>`;c+=n}}
cells+='<div class="sel"></div>';
def('xl-grid',`:host{display:grid;grid-template-columns:26px repeat(13,80px) 34px;grid-template-rows:19px 20px 20px 28px 20px 20px 20px 20px 21px 20px 20px 20px 20px 20px 78px 37px 38px 47px;font:14.200px/19px Lato,Carlito,sans-serif;color:#0c0c0c;width:1100px;background:#fffff8}
.corner{background:linear-gradient(135deg,transparent 50%,#d8dad3 50%) 12px 4px/11px 11px no-repeat;border-bottom:1px solid #d8dad3}
.ch{text-align:center;border-right:1px solid #dcded7;border-bottom:1px solid #a4a79e;font-size:12.500px;color:#444}.ch.s{background:#ecf0e6;color:#1f6f47;font-weight:700;border-bottom:2px solid #267350;border-right-color:#c2c6bc}.ch.last{border-right:0}
.rh{display:flex;align-items:flex-end;justify-content:center;border-right:1px solid #a4a79e;border-bottom:1px solid #dcded7;font-size:13px;color:#444;line-height:18px}.rh.s{background:#ecf0e6;color:#1f6f47;font-weight:700;border-right:2px solid #267350;border-bottom-color:#c2c6bc}
.m{display:flex;flex-direction:column;align-items:center;justify-content:center;border-right:1px solid #0c0c0c;border-bottom:1px solid #0c0c0c;line-height:20px;white-space:nowrap}.m div{height:20px}
.c{border-right:1px solid #dcded7;border-bottom:1px solid #dcded7;display:flex;align-items:flex-end;min-width:0;overflow:visible;white-space:nowrap;line-height:17px}.f{background:#cbcfc5;border-color:#a7aba2}
.sel{grid-area:4/11/13/15;border:2px solid #267350;margin:-1px 0 0 -1px;z-index:3;position:relative;box-shadow:inset 0 0 0 1px #fffff8aa}.sel:after{content:"";position:absolute;right:-3px;bottom:-3px;width:5px;height:5px;background:#267350;border:1px solid #fffff8;border-width:1px 0 0 1px}`,cells);
def('xl-vscroll',':host{width:12px;margin-left:3px;height:489px;padding-top:1px;display:flex;flex-direction:column;background:#fffff8}div{border:1px solid #a4a79e;border-right:0;display:flex;justify-content:center;align-items:center;width:12px}.t{background:#ecf0e6;flex:1;border:0}',
`<div style="height:14px">${I('sU')}</div><div style="height:275px;margin-top:-1px"></div><div class="t" style="background:#fffff8"></div><div style="height:14px">${I('sD')}</div>`);
def('xl-sheettabs',`:host{border-top:1px solid #a4a79e;width:1100px;height:27px;font-size:12px}.a{width:140px;height:26px;margin-top:-1px;border:1px solid #a4a79e;border-top:1px solid #fffff8;border-bottom:2px solid #267350;background:#fffff8;display:flex;align-items:center;padding-left:11px;color:#1f6f47;font-weight:700}.v{width:1px;height:20px;background:#a4a79e}.sb{display:flex;width:411px;height:15px;margin-top:3px;background:#ecf0e6}.sb div{border:1px solid #a4a79e;background:#fffff8;display:flex;align-items:center;justify-content:center}`,
lane(284,24,[ic(311,'triL'),ic(339,'triR'),[384,1,'<div class="v"></div>'],tx(401,94,'Jurisdiccion Civil'),[516,140,`<div class="a">${F(115,'Jurisdiccion Civil 1')}</div>`],tx(672,105,'Jurisdiccion Civil 2'),[794,1,'<div class="v"></div>'],[811,76,`<div style="overflow:hidden;width:76px">${F(80,'Jurisdicción C')}</div>`],tx(895,12,'...','color:#1f6f47;font-weight:700'),ic(920,'plus'),ic(956,'dots'),
[973,411,'<div class="sb"><div style="width:16px">'+I('sL')+'</div><div style="width:351px;margin-left:-1px"></div><div style="width:15px;margin-left:auto">'+I('sR')+'</div></div>']]));
def('xl-status',`:host{height:22px;background:#1d7a47;color:#eafaf0;font-size:11px}.g{width:38px;height:22px;background:#0f6636;display:flex;align-items:center;padding-left:12px}`,
lane(39,21,[tx(47,29,'LISTO','margin-bottom:1px'),tx(1027,69,'RECUENTO: 9','margin-bottom:1px'),[1113,38,`<div class="g">${I('vgrid')}</div>`],ic(1163,'vpage'),ic(1201,'vbrk'),ic(1232,'zm'),ic(1242,'zoom'),ic(1346,'zp'),tx(1370,27,'100%','margin-bottom:1px')]));

/* ---------- inner Windows taskbar ---------- */
def('win-taskbar',`:host{height:40px;background:linear-gradient(90deg,#22343b,#27373a 30%,#2c3331 60%,#12222b 80%);color:#f4f6f6}
.s{width:344px;height:40px;border:2px solid #cdd1c4;background:#fffff8;display:flex;align-items:center;gap:11px;padding-left:10px;color:#333;font-size:14px}
.t{height:40px;display:flex;align-items:center;justify-content:center;border-bottom:2px solid #76b9ed;padding-top:2px}.clk{line-height:18px}.n{position:relative}.n b{position:absolute;left:6px;top:7px;width:18px;height:18px;border-radius:50%;background:#3a4448;border:1px solid #999;font:700 11px/16px "Open Sans",sans-serif;text-align:center;color:#fff}`,
lane(39,40,[ic(55,'win'),[87,344,`<div class="s">${I('lens')}${F(161,'Escribe aquí para buscar')}</div>`],ic(446,'tview'),ic(493,'store'),ic(543,'book'),ic(591,'face'),ic(638,'edge',21),
...[[678,39,'chrome',22,22],[726,39,'folder',22,20],[770,43,'excelT',0,0,'#4d5957']].map(T1),[813,4,'<div style="width:4px;height:40px;border-bottom:2px solid #76b9ed;background:#3a4543"></div>'],...[[822,38,'outl'],[869,39,'ppt',0,0,'','transparent'],[916,38,'wordT'],[959,46,'shield',0,0,'radial-gradient(#c09a6a,#986a3c)','#e87a12'],[1010,39,'acro',0,0,'radial-gradient(#62181a,#2e2a2e)','#b4bcc8'],[1057,38,'anyd']].map(T1),
ic(1108,'tchev'),ic(1130,'batt'),ic(1157,'wifi'),ic(1178,'vol'),ic(1202,'avira'),ic(1227,'mega'),tx(1254,19,'ESP'),[1288,58,`<div class="clk"><div>${F(57,'10:28 p. m.')}</div><div>${F(58,'20/04/2020')}</div></div>`],[1364,26,`<div class="n">${I('note')}<b>10</b></div>`]]));
function T1([x,w,n,a,b,bg,bc]){return [x,w,`<div class="t" style="width:${w}px;${bg?`background:${bg};`:''}${bc?`border-color:${bc}`:''}">${I(n,a,b)}</div>`]}

/* ---------- Excel window ---------- */
def('excel-window',`:host{position:absolute;left:38px;top:96px;width:1368px;height:770px;border:1px solid #333;border-right:7px solid #000;background:#fffff8;overflow:hidden}
.body{display:flex;height:516px;margin-top:0}.sheet{display:flex;height:489px}.tint{position:absolute;left:896px;top:704px;width:128px;height:24px;background:linear-gradient(#90e0b888 2px,#40604a66 3px,#4a604a55 60%,#3a7a4a33)}`,
`<xl-title></xl-title><xl-tabs></xl-tabs><xl-ribbon></xl-ribbon><xl-formula></xl-formula><div class="body"><xl-recovery></xl-recovery><div><div class="sheet"><xl-grid></xl-grid><xl-vscroll></xl-vscroll></div><xl-sheettabs></xl-sheettabs></div></div><xl-status></xl-status><win-taskbar></win-taskbar><div class="tint"></div>`);

/* ---------- host desktop ---------- */
const names=['edge','store2','mail','xampp','dish','ij','astu','snip','opera','@p','cube','cube','pg','out10','vsg','ffox*','folder*','pcnet','operg','@n*','npp*','chrome*','lock*','@h*','post*','paint*','notep*','vsb*','anyg*','word10*','xl10*'];
const cell=n=>{const on=n.endsWith('*');n=n.replace('*','');let g;
 if(n=='@p')g='<span class="pj"><b>Project</b></span>';else if(n=='@n')g='<span class="pi"><em>Post-it</em><small>Notes</small></span>';
 else if(n=='@h')g=`<span class="hs">${I('hsb')}<b>HS</b></span>`;else g=I(n);
 return `<div class="k${n=='anyg'?' act':''}${on?' on':''}">${g}</div>`};
def('host-taskbar',`:host{height:40px;display:flex;background:linear-gradient(#222 8px,#04070b 8px);color:#9a9a9a}
.q{width:154px;height:40px;background:#333;display:flex;align-items:center;justify-content:space-between;padding-right:14px;font-size:14px}.tv{width:51px;display:flex;align-items:center;padding-left:14px}
.k{width:41px;display:flex;align-items:center;justify-content:center}.on{background:linear-gradient(#76b9ed,#76b9ed) 50% 100%/32px 2px no-repeat}.k.act{background:linear-gradient(#76b9ed,#76b9ed) 50% 100%/41px 2px no-repeat,#3a3a3c}
.pj{color:#e01818;font:700 7px/8px "Liberation Serif",serif;margin-bottom:10px}.pi{width:24px;height:24px;background:linear-gradient(#888 5px,#f3ef7c 5px);color:#111;display:flex;flex-direction:column;align-items:center;font:700 6px/9px "Liberation Sans",sans-serif;padding-top:6px}.pi em{background:#eee200;width:22px;text-align:center}.pi small{font-size:7px}
.hs{position:relative}.hs b{position:absolute;left:0;top:0;width:23px;text-align:center;font:700 11px/23px "Open Sans",sans-serif;color:#111}`,
`<div class="q">${F(11,'ar')}${I('mic')}</div><div class="tv">${I('tv2')}</div>${names.map(cell).join('')}`);
def('remote-desktop',`:host{width:1482px;height:1036px;position:relative;display:flex;flex-direction:column;justify-content:flex-end;overflow:hidden}
.st{height:24px;background:linear-gradient(#e6e6e6,#e0e0e0);color:#111;display:flex;align-items:center;position:relative;overflow:hidden}.o{position:absolute;left:59px;top:15px;width:39px;height:14px;background:#858585;border:1px solid #555;border-right:2px solid #111;border-radius:4px}.o:after{content:"";position:absolute;right:3px;top:3px;width:10px;height:8px;background:#ddd;border:1px solid #555}`,
`<excel-window></excel-window><div class="st"><div style="margin-left:-4px">${F(87,'ad confirmada)')}</div><div class="o"></div></div><host-taskbar></host-taskbar>`);

/* Text run spread to an exact width by adjusting its tracking. */
customElements.define('x-fit',class extends HTMLElement{connectedCallback(){if(this.shadowRoot)return;
  this.attachShadow({mode:'open'}).innerHTML='<style>:host{display:inline-block;white-space:pre;flex:none}span{display:inline-block;white-space:pre}</style><span><slot></slot></span>';
  const s=this.shadowRoot.querySelector('span'),w=+this.getAttribute('w'),n=this.textContent.length,m=s.getBoundingClientRect().width;
  if(m){s.style.letterSpacing=((w-m)/n).toFixed(3)+'px'}this.style.width=w+'px';}});
</script>
</body>
</html>
